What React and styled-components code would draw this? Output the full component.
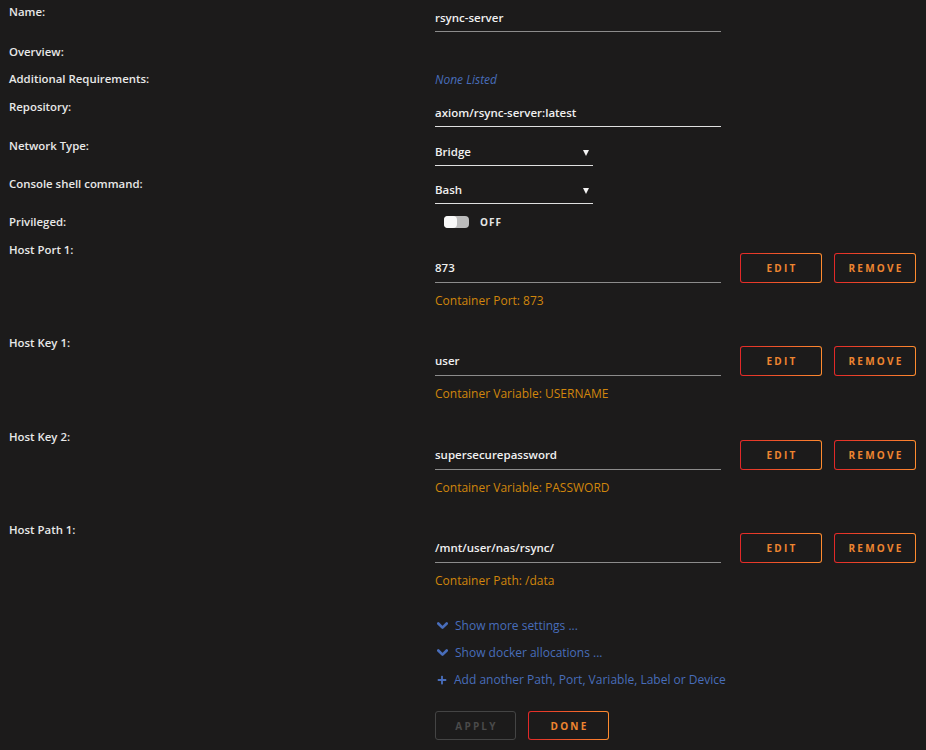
import React from 'react';
import styled, { createGlobalStyle } from 'styled-components';
import { FaPlus } from 'react-icons/fa';

const GlobalStyle = createGlobalStyle`
    html, body {
        margin: 0;
        background: #1c1b1b;
    }
    body {
        font-family: "Open Sans", "Noto Sans", sans-serif;
        color: #f2f2f2;
    }
`;

const hosts = [
    { label: 'Host Port 1:', value: '873', hint: 'Container Port: 873' },
    { label: 'Host Key 1:', value: 'user', hint: 'Container Variable: USERNAME' },
    { label: 'Host Key 2:', value: 'supersecurepassword', hint: 'Container Variable: PASSWORD' },
    { label: 'Host Path 1:', value: '/mnt/user/nas/rsync/', hint: 'Container Path: /data' },
];

//bold chevron like the font awesome one
const Chevron = () => (
    <svg width="11" height="8" viewBox="0 0 11 8">
        <path d="M1.3 1.5 L5.5 5.7 L9.7 1.5" fill="none" stroke="currentColor" strokeWidth="2.6" strokeLinecap="round" strokeLinejoin="round" />
    </svg>
);

const App = () => {
    return (
        <PAGE>
            <GlobalStyle />
            <ROW $h={40}>
                <LABEL>Name:</LABEL>
                <VALUE>
                    <INPUT $w={286} $line="#8c8c8c">rsync-server</INPUT>
                </VALUE>
            </ROW>
            <ROW $h={27}>
                <LABEL>Overview:</LABEL>
                <VALUE />
            </ROW>
            <ROW $h={28}>
                <LABEL>Additional Requirements:</LABEL>
                <VALUE>
                    <NONE>None Listed</NONE>
                </VALUE>
            </ROW>
            <ROW $h={39}>
                <LABEL>Repository:</LABEL>
                <VALUE>
                    <INPUT $w={286}>axiom/rsync-server:latest</INPUT>
                </VALUE>
            </ROW>
            <ROW $h={38}>
                <LABEL>Network Type:</LABEL>
                <VALUE>
                    <INPUT $w={158}>
                        Bridge
                        <ARROW />
                    </INPUT>
                </VALUE>
            </ROW>
            <ROW $h={38}>
                <LABEL>Console shell command:</LABEL>
                <VALUE>
                    <INPUT $w={158}>
                        Bash
                        <ARROW />
                    </INPUT>
                </VALUE>
            </ROW>
            <ROW $h={28}>
                <LABEL>Privileged:</LABEL>
                <VALUE>
                    <SWITCH>
                        <TRACK><KNOB /></TRACK>
                        <SWITCHTEXT>OFF</SWITCHTEXT>
                    </SWITCH>
                </VALUE>
            </ROW>
            {hosts.map((h, i) => (
                <ROW key={h.label} $h={i === 0 || i === 2 ? 93 : 94}>
                    <LABEL>{h.label}</LABEL>
                    <HOSTVALUE>
                        <HOSTLINE>
                            <INPUT $w={286} $line="#8c8c8c" $tall>{h.value}</INPUT>
                            <BUTTONS>
                                <BUTTON>EDIT</BUTTON>
                                <BUTTON>REMOVE</BUTTON>
                            </BUTTONS>
                        </HOSTLINE>
                        <HINT>{h.hint}</HINT>
                    </HOSTVALUE>
                </ROW>
            ))}
            <LINKS>
                <LINK><Chevron />Show more settings ...</LINK>
                <LINK><Chevron />Show docker allocations ...</LINK>
                <LINK><FaPlus size={10} />Add another Path, Port, Variable, Label or Device</LINK>
            </LINKS>
            <ACTIONS>
                <BUTTON $small disabled>APPLY</BUTTON>
                <BUTTON $small>DONE</BUTTON>
            </ACTIONS>
        </PAGE>
    );
};

const PAGE = styled.div`
    padding: 0 0 12px 9px;
    font-size: 12px;
`;

const ROW = styled.div`
    display: grid;
    grid-template-columns: 426px 1fr;
    height: ${p => p.$h}px;
`;

const LABEL = styled.div`
    line-height: 24px;
    font-size: 11.4px;
    font-weight: 600;
    color: #e8e8e8;
    white-space: nowrap;
`;

const VALUE = styled.div`
    display: flex;
    flex-direction: column;
    align-items: flex-start;
`;

const HOSTVALUE = styled.div`
    display: flex;
    flex-direction: column;
    padding-top: 15px;
`;

const HOSTLINE = styled.div`
    display: flex;
    align-items: flex-end;
    gap: 19px;
`;

const BUTTONS = styled.div`
    display: flex;
    gap: 12px;
`;

const INPUT = styled.div`
    position: relative;
    box-sizing: border-box;
    width: ${p => p.$w}px;
    height: ${p => (p.$tall ? 29 : 28)}px;
    margin-top: ${p => (p.$tall ? 0 : 4)}px;
    padding-top: 6px;
    line-height: 16px;
    font-size: 11.5px;
    font-weight: 600;
    color: #f0f0f0;
    border-bottom: 1px solid ${p => p.$line || '#e0e0e0'};
`;

const ARROW = styled.span`
    position: absolute;
    right: 4px;
    top: 12px;
    width: 0;
    height: 0;
    border-left: 3px solid transparent;
    border-right: 3px solid transparent;
    border-top: 6px solid #f4f4f4;
`;

const NONE = styled.div`
    line-height: 25px;
    font-style: italic;
    color: #486dba;
`;

const SWITCH = styled.div`
    display: flex;
    align-items: center;
    gap: 11px;
    height: 23px;
    padding-left: 9px;
`;

const TRACK = styled.div`
    width: 25px;
    height: 12px;
    border-radius: 4px;
    background: #bcbcbc;
    display: flex;
`;

const KNOB = styled.div`
    width: 13px;
    height: 12px;
    border-radius: 4px;
    background: #f8f8f8;
`;

const SWITCHTEXT = styled.span`
    font-size: 10px;
    font-weight: 700;
    letter-spacing: 1px;
    color: #e6e6e6;
`;

const HINT = styled.div`
    margin-top: 10px;
    line-height: 16px;
    color: #d1860c;
`;

const BUTTON = styled.button`
    box-sizing: border-box;
    width: ${p => (p.$small ? 81 : 82)}px;
    height: ${p => (p.$small ? 29 : 30)}px;
    border: 1px solid transparent;
    border-radius: 3px;
    background:
        linear-gradient(#1c1b1b, #1c1b1b) padding-box,
        linear-gradient(90deg, #e22828, #ff8c2f) border-box;
    color: #ee8530;
    font-family: "Open Sans", "Noto Sans", sans-serif;
    font-size: 10px;
    font-weight: 700;
    letter-spacing: 2.2px;
    padding: 0 0 0 2px;
    cursor: pointer;
    &:disabled {
        background: #1c1b1b;
        border-color: #444;
        color: #4a4a4a;
        cursor: default;
    }
`;

const LINKS = styled.div`
    display: flex;
    flex-direction: column;
    padding-left: 428px;
`;

const LINK = styled.div`
    display: flex;
    align-items: center;
    gap: 7px;
    height: 27px;
    color: #486dba;
    svg {
        flex: none;
    }
`;

const ACTIONS = styled.div`
    display: flex;
    gap: 12px;
    margin-top: 18px;
    padding-left: 426px;
`;

export default App;
